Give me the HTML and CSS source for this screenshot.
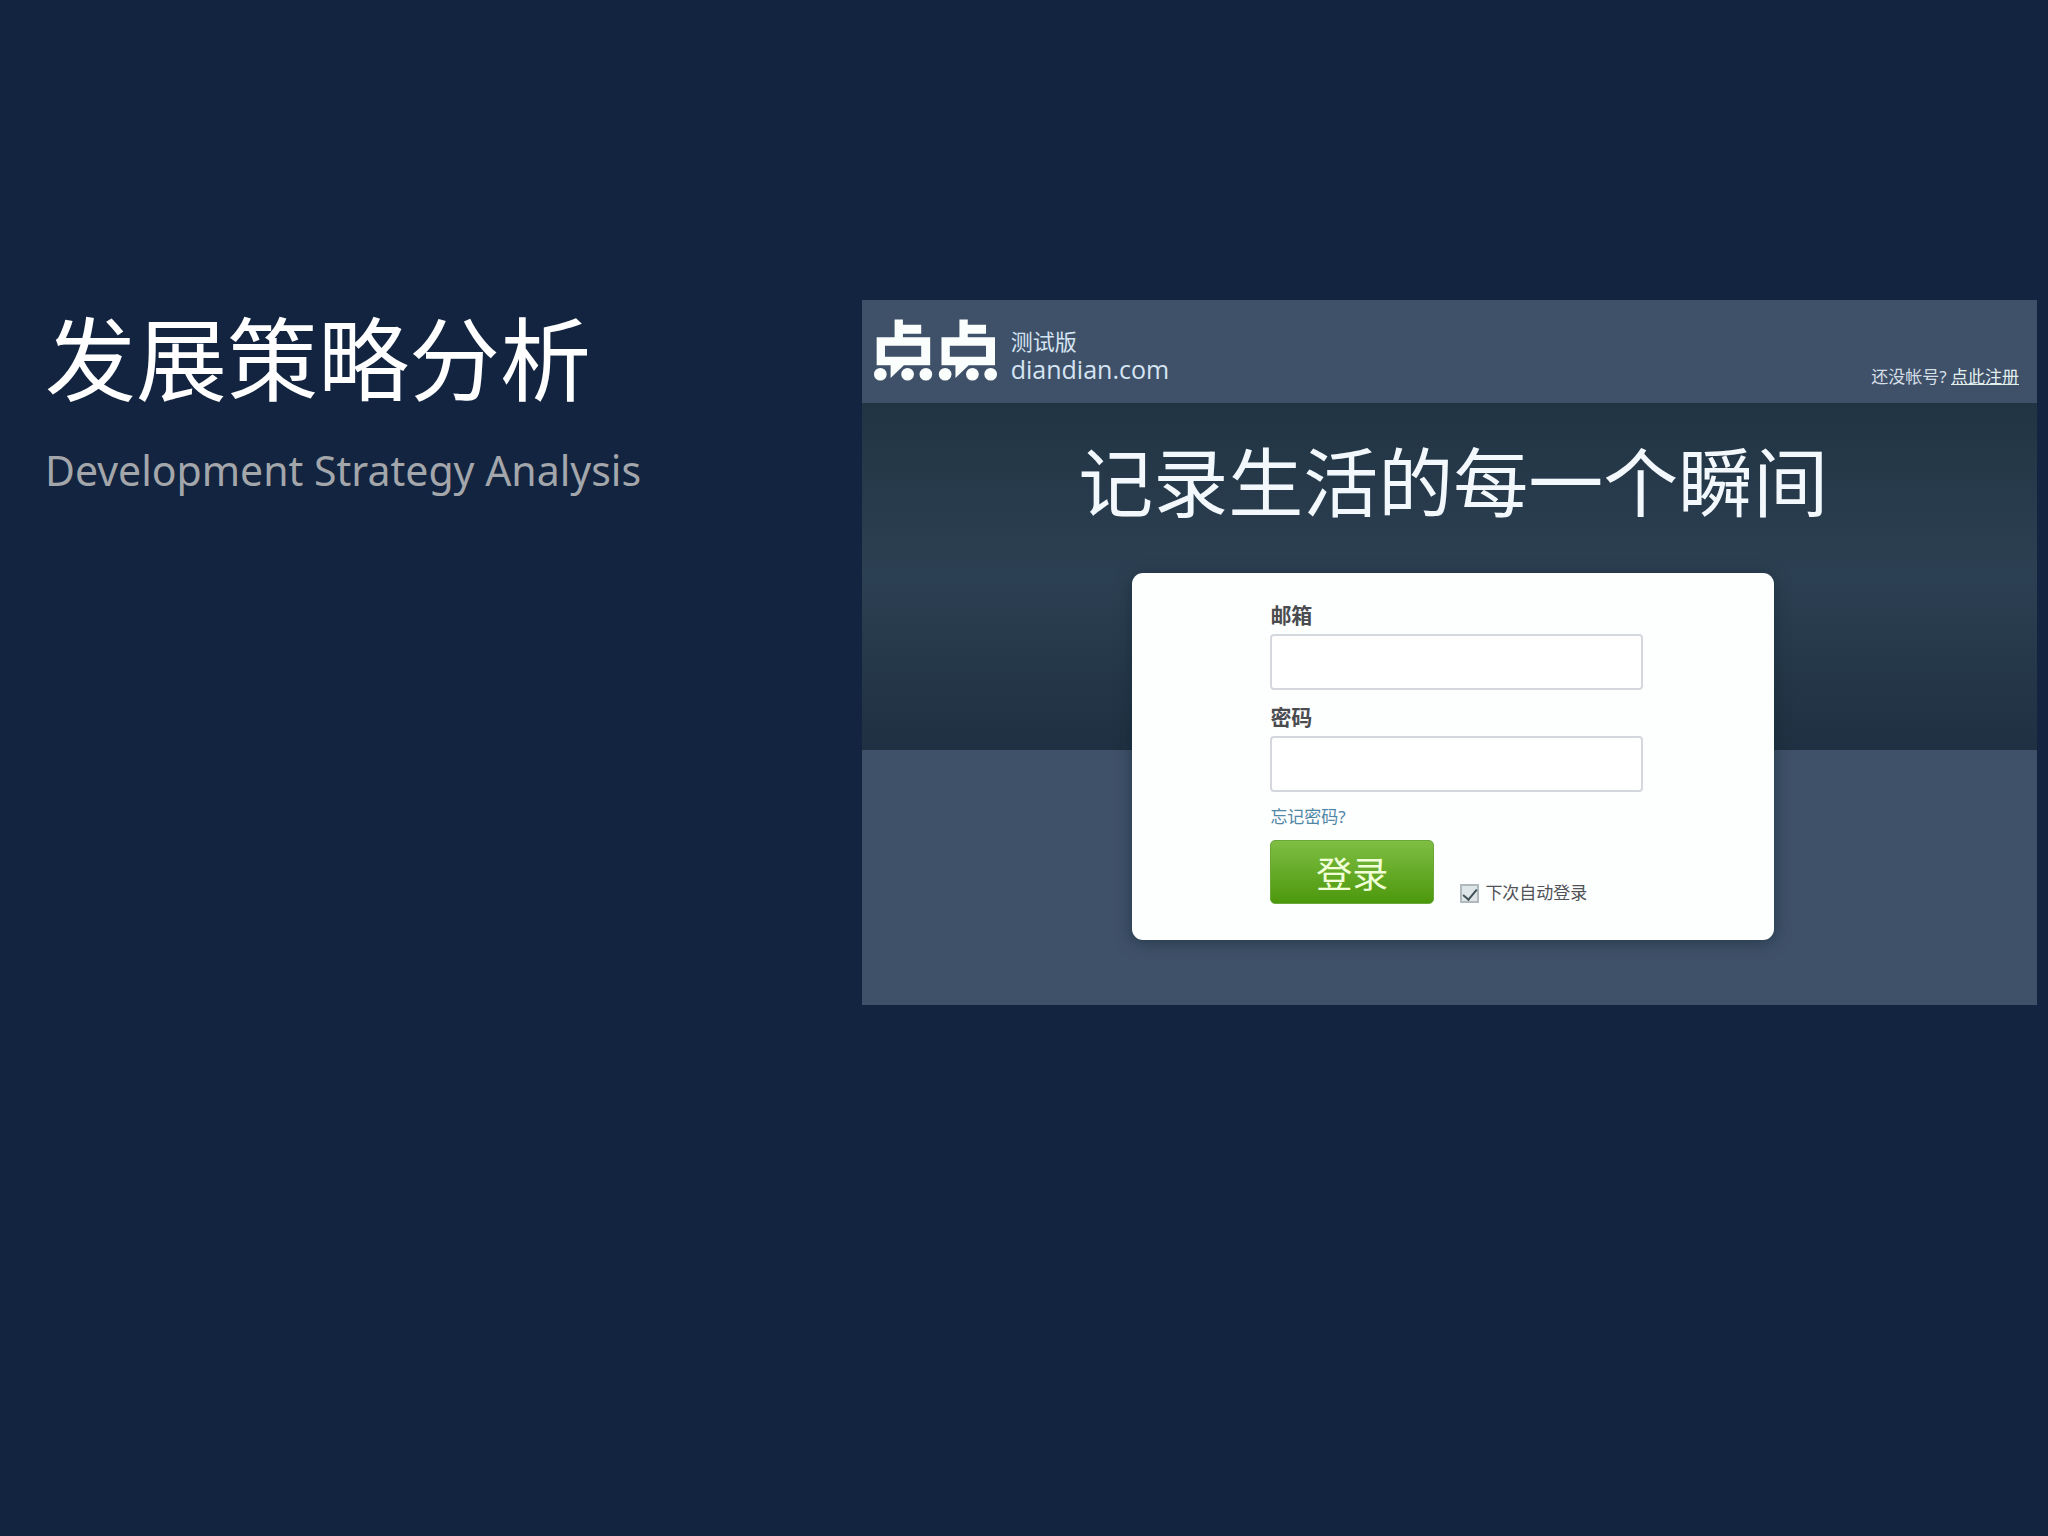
FILE: index.html
```html
<!DOCTYPE html>
<html lang="zh-CN">
<head>
    <meta charset="UTF-8">
    <meta name="viewport" content="width=device-width, initial-scale=1.0">
    <title>发展策略分析</title>
    <link rel="stylesheet" href="styles.css">
</head>
<body>

    <main class="slide">
        <!-- Slide title -->
        <div class="slide-title">
            <h1>发展策略分析</h1>
            <p>Development Strategy Analysis</p>
        </div>

        <!-- Login page -->
        <section class="site">
            <header class="site-header">
                <a class="brand" href="#">
                    <svg class="logo" viewBox="0 0 370 184" role="img" aria-label="点点">
                        <defs>
                            <g id="dian">
                                <path fill-rule="evenodd" d="M62 0h25v16h55v27H87v11h82v84H90L50 176V138H8V54H62zM33 79v33h109V79z"/>
                                <circle cx="19" cy="165" r="19"/>
                                <circle cx="101" cy="165" r="19"/>
                                <circle cx="156" cy="165" r="19"/>
                            </g>
                        </defs>
                        <use href="#dian"/>
                        <use href="#dian" x="195"/>
                    </svg>
                    <span class="brand-text">
                        <span class="brand-tag">测试版</span>
                        <span class="brand-name">diandian.com</span>
                    </span>
                </a>
                <p class="register">还没帐号? <a href="#">点此注册</a></p>
            </header>

            <div class="hero">
                <h2>记录生活的每一个瞬间</h2>

                <form class="login-card">
                    <label class="field-label" for="email">邮箱</label>
                    <input class="field" type="email" id="email" name="email">

                    <label class="field-label" for="password">密码</label>
                    <input class="field" type="password" id="password" name="password">

                    <a class="forgot" href="#">忘记密码?</a>

                    <div class="actions">
                        <button class="login-button" type="button">登录</button>
                        <label class="remember">
                            <input type="checkbox" name="remember" checked>
                            下次自动登录
                        </label>
                    </div>
                </form>
            </div>
        </section>
    </main>

</body>
</html>
```
FILE: styles.css
```css
* {
    box-sizing: border-box;
}

body {
    margin: 0;
    min-height: 100vh;
    font-family: "Noto Sans", "Noto Sans CJK SC", sans-serif;
    background-color: #12243f;
}

h1, h2, p {
    margin: 0;
    font-weight: 400;
}

.slide {
    display: grid;
    grid-template-columns: 1fr 59%;
    align-items: start;
    padding: 300px 11px 0 45px;
}

/* Slide title */
.slide-title h1 {
    font-family: "Noto Sans CJK SC", sans-serif;
    font-size: 91px;
    line-height: 108px;
    color: #fff;
}

.slide-title p {
    margin-top: 32px;
    font-size: 41px;
    line-height: 60px;
    color: #a3a6aa;
}

/* Login page */
.site {
    background-color: #3f5169;
}

.site-header {
    display: flex;
    justify-content: space-between;
    align-items: flex-end;
    height: 103px;
    padding: 0 18px 12px 12px;
}

.brand {
    display: flex;
    align-items: flex-end;
    gap: 14px;
    padding-bottom: 8px;
    color: #d5e4f2;
    text-decoration: none;
}

.logo {
    width: 123px;
    height: 62px;
    margin-bottom: 2px;
    fill: #fafffd;
}

.brand-text {
    display: flex;
    flex-direction: column;
}

.brand-tag {
    font-size: 22px;
    line-height: 28px;
}

.brand-name {
    font-family: "Open Sans", sans-serif;
    font-size: 25px;
    line-height: 28px;
}

.register {
    font-size: 17px;
    line-height: 28px;
    color: #d5dee6;
}

.register a {
    color: #e2efef;
}

/* The dark band ends behind the card */
.hero {
    display: flex;
    flex-direction: column;
    align-items: center;
    padding: 0 0 65px 8px;
    background: linear-gradient(#213443, #2c4053 50%, #1e3041) no-repeat 0 0 / 100% 347px;
}

.hero h2 {
    padding: 16px 0 34px;
    font-family: "Noto Sans CJK SC", sans-serif;
    font-size: 75px;
    line-height: 120px;
    color: #f2f8fc;
}

.login-card {
    display: flex;
    flex-direction: column;
    width: 55%;
    padding: 26px 131px 36px 138px;
    border-radius: 11px;
    background-color: #fdfefe;
    box-shadow: 0 2px 16px rgba(20, 40, 50, 0.6);
}

.field-label {
    font-size: 21px;
    line-height: 32px;
    font-weight: 700;
    color: #4a4c50;
}

.field {
    width: 100%;
    height: 56px;
    margin: 3px 0 11px;
    padding: 0 12px;
    border: 2px solid #d5d7de;
    border-radius: 4px;
    background-color: #fff;
    font-size: 20px;
}

.forgot {
    align-self: flex-start;
    font-size: 17px;
    line-height: 28px;
    color: #4f87a5;
    text-decoration: none;
}

.actions {
    display: flex;
    align-items: flex-end;
    gap: 26px;
    margin-top: 9px;
}

.login-button {
    width: 164px;
    height: 64px;
    padding: 0;
    border: 1px solid #6aa83a;
    border-radius: 5px;
    background: linear-gradient(#7fbe43, #4c980c);
    font-family: "Noto Sans CJK SC", sans-serif;
    font-size: 36px;
    line-height: 60px;
    color: #f0ffd8;
    cursor: pointer;
}

.remember {
    display: flex;
    align-items: center;
    gap: 6px;
    font-size: 17px;
    line-height: 22px;
    color: #505256;
}

.remember input {
    display: grid;
    place-items: center;
    width: 19px;
    height: 19px;
    margin: 0;
    appearance: none;
    border: 2px solid #b0b9bd;
    background-color: #dde5e7;
}

.remember input:checked::before {
    content: "";
    width: 6px;
    height: 12px;
    border: solid #3f5058;
    border-width: 0 2px 2px 0;
    transform: rotate(40deg);
}
```
